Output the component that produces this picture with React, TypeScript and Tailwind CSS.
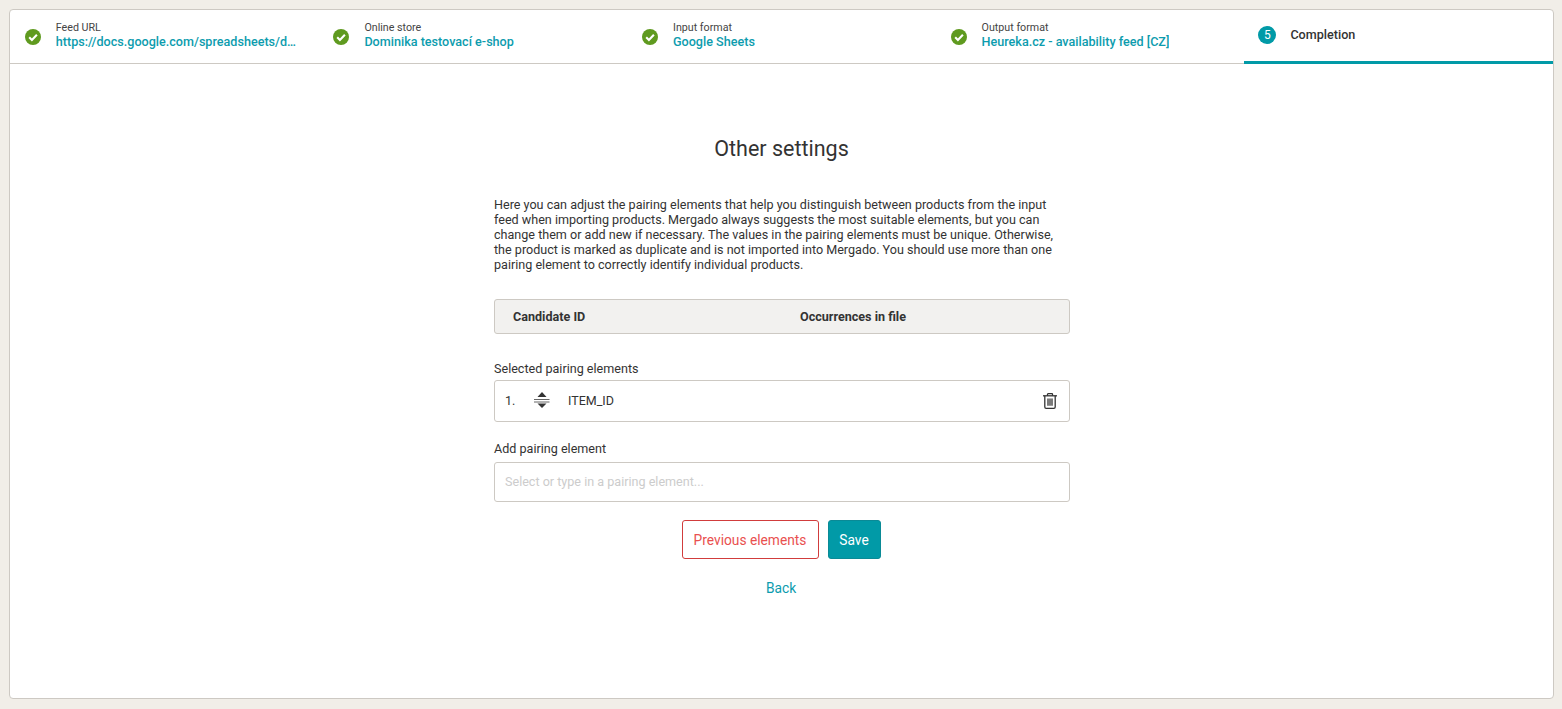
import React from "react";

function Check() {
  return (
    <svg width="16" height="16" viewBox="0 0 16 16" className="shrink-0">
      <circle cx="8" cy="8" r="8" fill="#5f9a1f" />
      <path d="M4.2 8.3 L6.9 11 L11.9 5.7" fill="none" stroke="#fff" strokeWidth="2.1" />
    </svg>
  );
}

const steps = [
  { label: "Feed URL", value: "https://docs.google.com/spreadsheets/d/1aBcDeFgHiJk" },
  { label: "Online store", value: "Dominika testovací e-shop" },
  { label: "Input format", value: "Google Sheets" },
  { label: "Output format", value: "Heureka.cz - availability feed [CZ]" },
];

function Sort() {
  return (
    <svg width="16" height="16" viewBox="0 0 16 16" className="mb-[2px] shrink-0">
      <path d="M8 0 L12.500 5 H3.500 Z" fill="#333" />
      <path d="M8 16 L12.500 11.500 H3.500 Z" fill="#333" />
      <path d="M0 7.500 H15.500 M0 10 H15.500" stroke="#666" strokeWidth="1" />
    </svg>
  );
}

function Trash() {
  return (
    <svg width="14" height="16" viewBox="0 0 14 16" fill="none" stroke="#333" strokeWidth="1.300" className="shrink-0">
      <path d="M0 2.800 H14" />
      <path d="M4.500 2.800 V1.300 Q4.500 .7 5.100 .7 H8.900 Q9.500 .7 9.500 1.300 V2.800" />
      <path d="M1.800 2.800 V14 Q1.800 15.300 3.100 15.300 H10.900 Q12.200 15.300 12.200 14 V2.800" />
      <path d="M5 5.500 V12.800 M7 5.500 V12.800 M9 5.500 V12.800" />
    </svg>
  );
}

export default function App() {
  return (
    <div className="h-[709px] bg-[#f1eee8] pt-[9px] pl-[9px] pr-[8px] font-['Roboto',sans-serif] text-[#333]">
      <div className="h-[690px] rounded-[4px] border border-[#cdc9c3] bg-white overflow-hidden">
        <div className="grid h-[54px] grid-cols-5 border-b border-[#cdc9c3]">
          {steps.map((s) => (
            <div key={s.label} className="flex min-w-0 items-center pl-[14.800px] pr-[21px]">
              <Check />
              <div className="ml-[15px] min-w-0 pb-[5px]">
                <div className="text-[10.700px] leading-[13px] text-[#444]">{s.label}</div>
                <div className="truncate text-[12.600px] leading-[15px] font-medium text-[#0d9cae]">{s.value}</div>
              </div>
            </div>
          ))}
          <div className="flex h-[54px] items-start border-b-[3px] border-[#019aa7] pl-[14px] pt-[16px]">
            <div className="flex h-[18px] w-[18px] items-center justify-center rounded-full bg-[#019aa7] text-[12px] text-white">5</div>
            <div className="ml-[14px] text-[12.600px] leading-[17px] font-medium text-[#333]">Completion</div>
          </div>
        </div>

        <div className="ml-[484px] w-[576px] pt-[70px]">
          <h1 className="pr-px text-center text-[21.500px] leading-[30px] text-[#333]">Other settings</h1>
          <p className="mt-[33px] text-[12.580px] leading-[15px] text-[#333]">
            Here you can adjust the pairing elements that help you distinguish between products from the input feed when importing products. Mergado always suggests the most suitable elements, but you can change them or add new if necessary. The values in the pairing elements must be unique. Otherwise, the product is marked as duplicate and is not imported into Mergado. You should use more than one pairing element to correctly identify individual products.
          </p>

          <div className="mt-[27px] flex h-[35px] items-center rounded-[3px] border border-[#cdc9c3] bg-[#f2f1ef] pt-px text-[12.580px] font-bold">
            <div className="w-[305px] pl-[18px]">Candidate ID</div>
            <div>Occurrences in file</div>
          </div>

          <div className="mt-[27px] text-[12.580px] leading-[16px]">Selected pairing elements</div>
          <div className="mt-[3px] flex h-[42px] items-center rounded-[3px] border border-[#cdc9c3] pl-[10px] pr-[12px] text-[12.500px]">
            <span className="w-[29px]">1.</span>
            <Sort />
            <span className="ml-[18px] grow">ITEM_ID</span>
            <Trash />
          </div>

          <div className="mt-[19px] text-[12.580px] leading-[16px]">Add pairing element</div>
          <div className="mt-[5px] flex h-[40px] items-center rounded-[3px] border border-[#cdc9c3] px-[10px] text-[12.580px] text-[#cccccc]">
            Select or type in a pairing element...
          </div>

          <div className="mt-[18px] flex justify-center gap-[9px] pr-[2px] text-[13.750px]">
            <div className="flex h-[39px] w-[137px] items-center justify-center rounded-[3px] border border-[#d13c3c] pt-px text-[#e9504f]">Previous elements</div>
            <div className="flex h-[39px] w-[53px] items-center justify-center rounded-[3px] border border-[#0a8a96] bg-[#019aa7] pt-px text-white">Save</div>
          </div>
          <div className="mt-[20px] pr-[2px] text-center text-[13.750px] leading-[18px] text-[#0d9cae]">Back</div>
        </div>
      </div>
    </div>
  );
}
